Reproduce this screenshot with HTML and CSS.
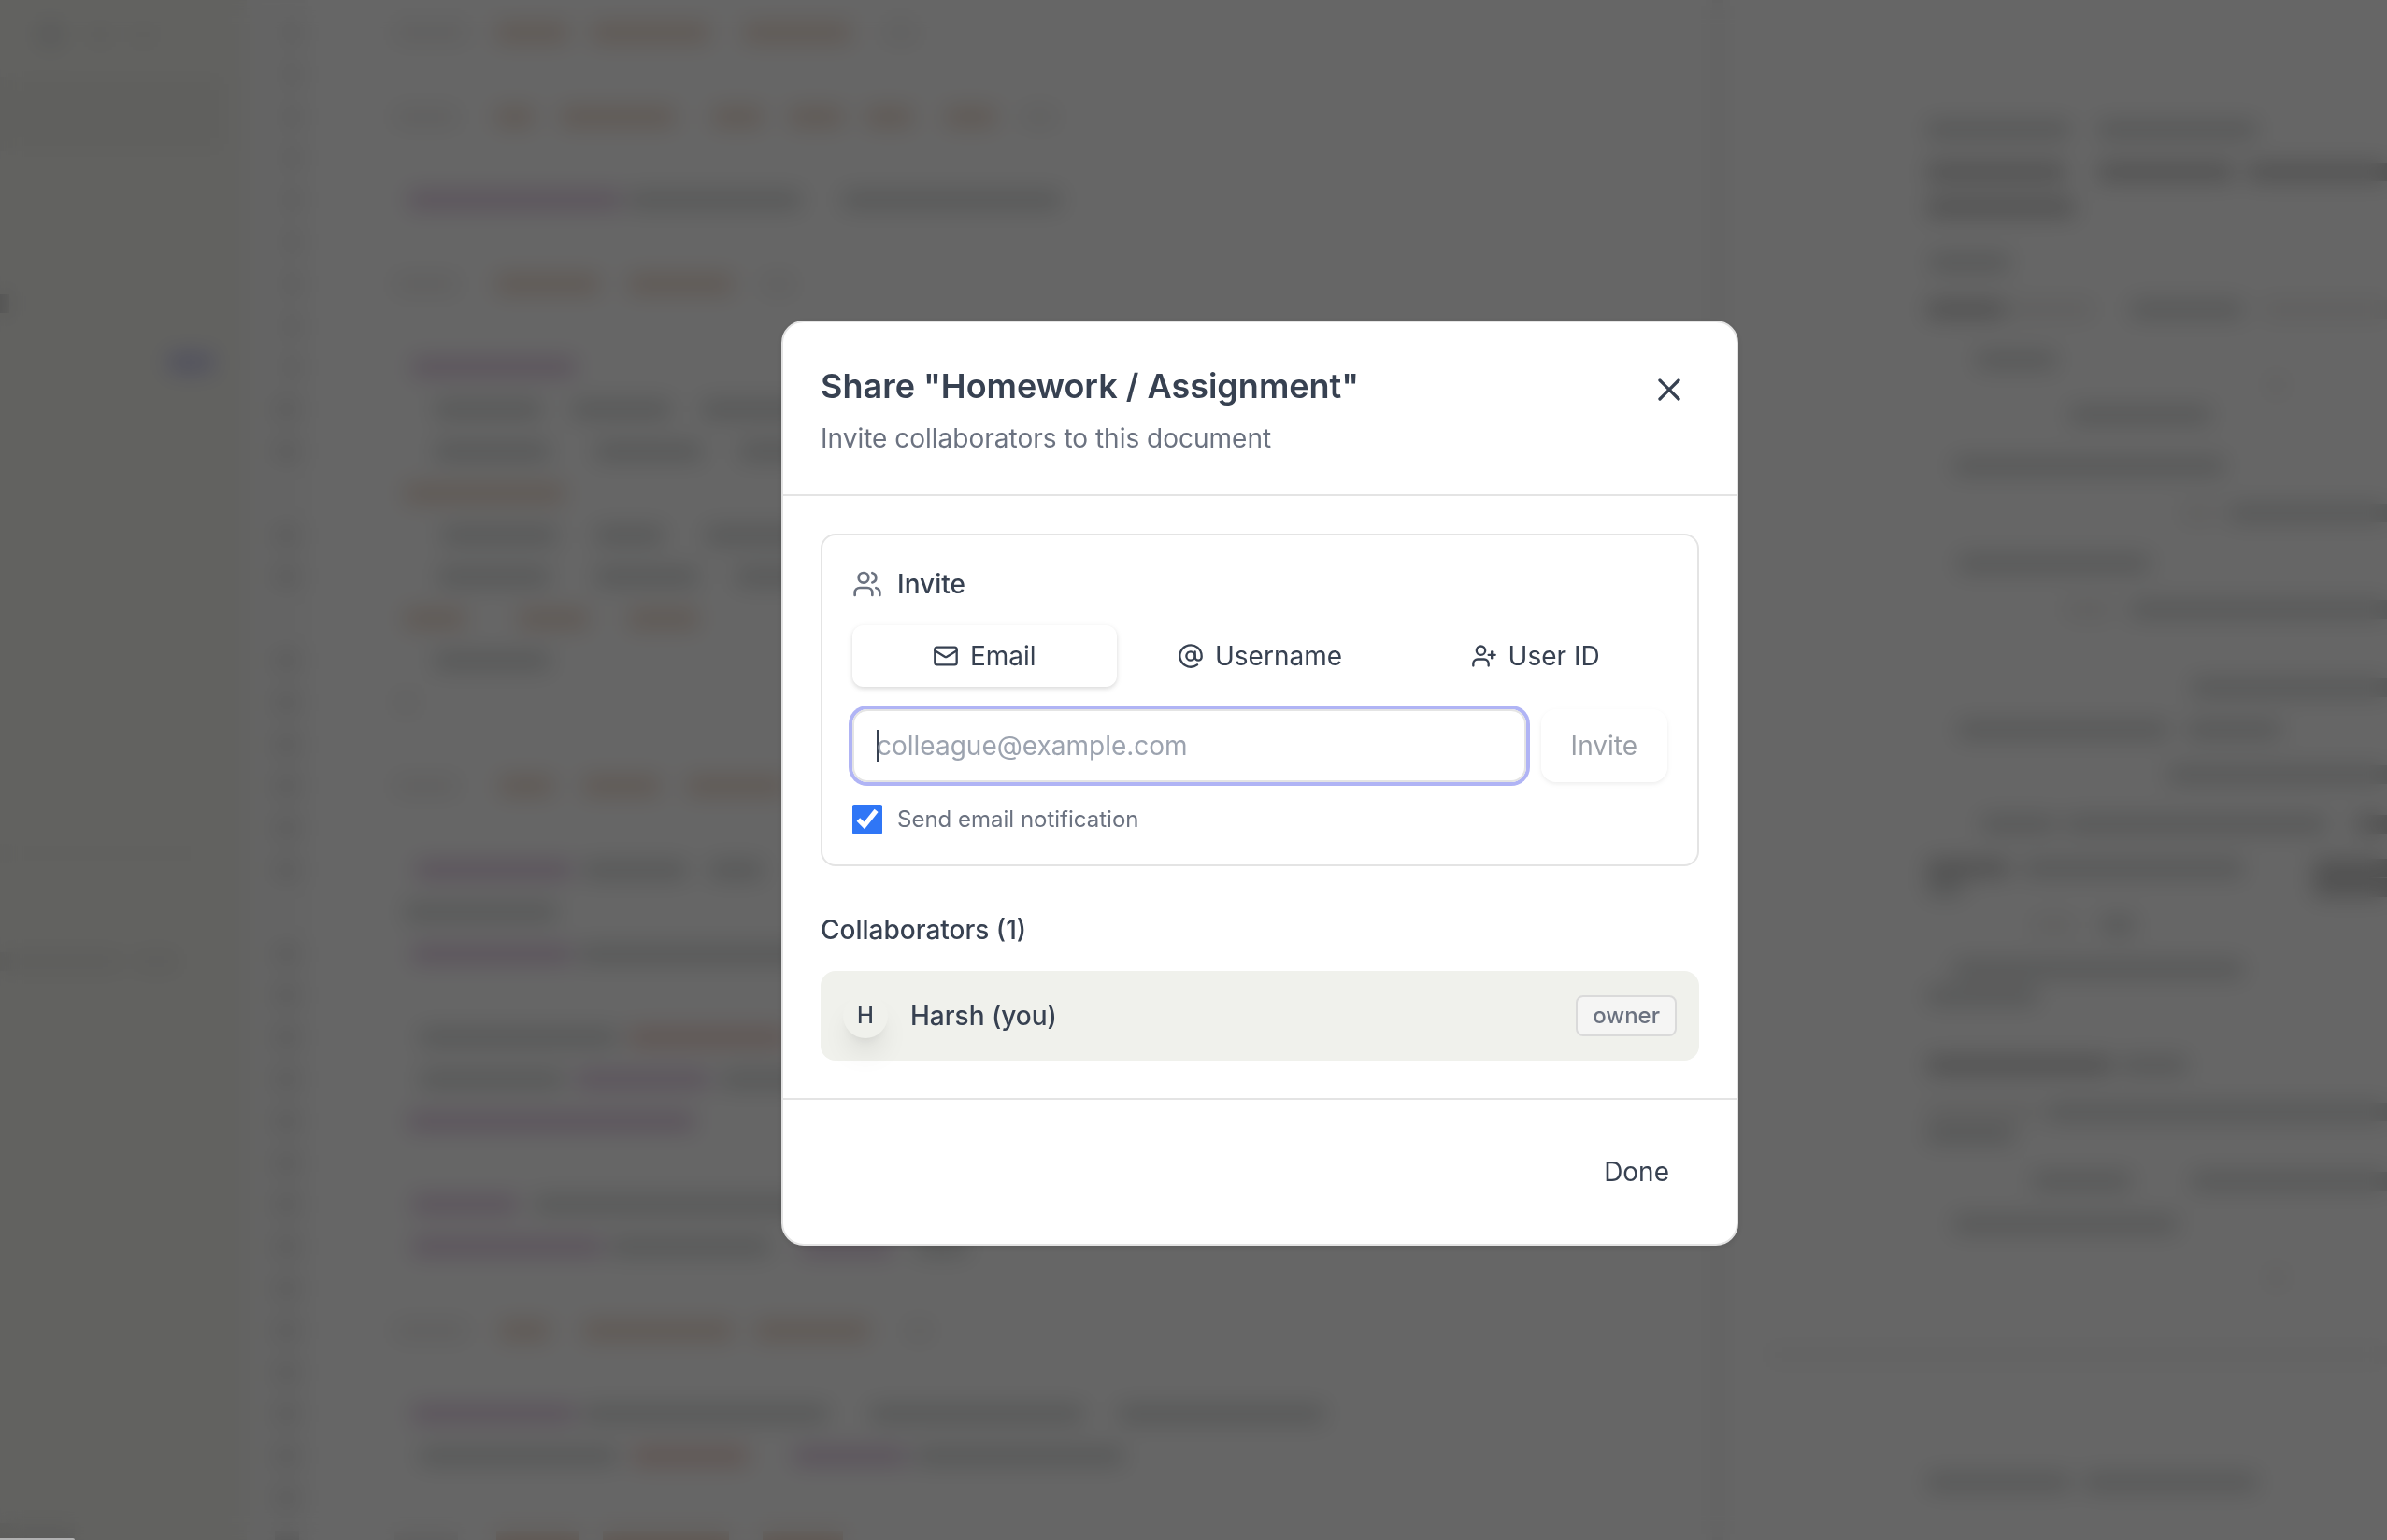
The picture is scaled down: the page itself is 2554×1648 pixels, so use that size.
FILE: index.html
```html
<!DOCTYPE html>
<html lang="en">

<head>
    <meta charset="UTF-8" />
    <meta name="viewport" content="width=device-width, initial-scale=1.0" />
    <title>Share document</title>

    <link rel="stylesheet" href="styles.css">
</head>

<body>
    <div class="workspace" aria-hidden="true">
        <div class="sidebar lines" data-lines="sidebar"></div>
        <div class="gutter lines" data-lines="gutter"></div>
        <div class="editor lines" data-lines="code"></div>
        <div class="preview lines" data-lines="page"></div>
    </div>

    <div class="overlay">
        <div class="modal" role="dialog" aria-modal="true" aria-labelledby="share-title">
            <header class="modal-header">
                <div>
                    <h2 class="modal-title" id="share-title">Share "Homework / Assignment"</h2>
                    <p class="modal-subtitle">Invite collaborators to this document</p>
                </div>
                <button type="button" class="close-button" aria-label="Close">
                    <svg class="icon icon-lg" viewBox="0 0 24 24">
                        <path d="M18 6 6 18" />
                        <path d="m6 6 12 12" />
                    </svg>
                </button>
            </header>

            <div class="modal-body">
                <form class="invite-box">
                    <h3 class="invite-heading">
                        <svg class="icon icon-md" viewBox="0 0 24 24">
                            <path d="M16 21v-2a4 4 0 0 0-4-4H6a4 4 0 0 0-4 4v2" />
                            <circle cx="9" cy="7" r="4" />
                            <path d="M22 21v-2a4 4 0 0 0-3-3.87" />
                            <path d="M16 3.13a4 4 0 0 1 0 7.75" />
                        </svg>
                        Invite
                    </h3>
                    <div class="tabs">
                        <button type="button" class="tab tab-active">
                            <svg class="icon icon-sm" viewBox="0 0 24 24">
                                <rect x="2" y="4" width="20" height="16" rx="2" />
                                <path d="m22 7-8.97 5.7a1.94 1.94 0 0 1-2.06 0L2 7" />
                            </svg>
                            Email
                        </button>
                        <button type="button" class="tab">
                            <svg class="icon icon-sm" viewBox="0 0 24 24">
                                <circle cx="12" cy="12" r="4" />
                                <path d="M16 8v5a3 3 0 0 0 6 0v-1a10 10 0 1 0-4 8" />
                            </svg>
                            Username
                        </button>
                        <button type="button" class="tab">
                            <svg class="icon icon-sm" viewBox="0 0 24 24">
                                <path d="M16 21v-2a4 4 0 0 0-4-4H6a4 4 0 0 0-4 4v2" />
                                <circle cx="9" cy="7" r="4" />
                                <path d="M19 8v6" />
                                <path d="M22 11h-6" />
                            </svg>
                            User ID
                        </button>
                    </div>
                    <div class="invite-row">
                        <input type="email" class="invite-input" placeholder="colleague@example.com" aria-label="Email address" />
                        <button type="submit" class="invite-button" disabled>Invite</button>
                    </div>
                    <div class="notify">
                        <input type="checkbox" class="notify-checkbox" id="notify" checked />
                        <label for="notify">Send email notification</label>
                    </div>
                </form>

                <section class="collaborators">
                    <h3 class="collaborators-title">Collaborators (1)</h3>
                    <div class="collaborator">
                        <span class="avatar">H</span>
                        <span class="collaborator-name">Harsh (you)</span>
                        <span class="role">owner</span>
                    </div>
                </section>
            </div>

            <footer class="modal-footer">
                <button type="button" class="done-button">Done</button>
            </footer>
        </div>
    </div>
    <div class="status-edge"></div>

    <script src="script.js"></script>
</body>

</html>
```

FILE: styles.css
```css
* {
    box-sizing: border-box;
    margin: 0;
    padding: 0;
}

body {
    background: #fff;
    color: #374151;
    font-family: Inter, "Liberation Sans", sans-serif;
    font-size: 28px;
    height: 100vh;
    line-height: 40px;
    overflow: hidden;
}

button,
input {
    background: none;
    border: none;
    color: inherit;
    font: inherit;
}

button {
    cursor: pointer;
}

/* document behind the dialog */
.workspace {
    display: grid;
    grid-template-columns: 264px 66px 1514px 1fr;
    height: 100vh;
    overflow: hidden;
}

.lines {
    overflow: hidden;
}

.sidebar {
    background: #f5f5f0;
}

.gutter {
    background: #fbfbfb;
}

.editor {
    border-right: 12px solid #f4f4f4;
}

.line {
    align-items: center;
    display: flex;
    height: 20px;
}

.run {
    flex: none;
    height: 20px;
}

.gray {
    background: #d9dbdb;
}

.faint {
    background: #f0efee;
}

.dark {
    background: #cbcbcb;
}

.orange {
    background: #efdccf;
}

.purple {
    background: #e3cee5;
}

.red {
    background: #efd3cc;
}

.blue {
    background: #c6c6ec;
}

.panel {
    background: #f0f0eb;
    height: 80px;
}

.rule {
    background: #f8f8f8;
}

.sidebar .rule {
    background: #f2f2ed;
}

.sidebar .faint {
    background: #e8e8e4;
}

.gutter .gray {
    background: #e2e2e2;
}

.overlay {
    align-items: center;
    backdrop-filter: blur(12px);
    background: rgba(0, 0, 0, 0.6);
    display: flex;
    inset: 0;
    justify-content: center;
    padding: 28px 0 0 142px;
    position: fixed;
}

.modal {
    background: #fff;
    border: 2px solid #e4e4e4;
    border-radius: 24px;
    box-shadow: 0 2px 8px rgba(0, 0, 0, 0.1);
    max-width: 1024px;
    width: 100%;
}

.icon {
    fill: none;
    flex: none;
    stroke: currentColor;
    stroke-linecap: round;
    stroke-linejoin: round;
    stroke-width: 2;
}

.icon-sm {
    height: 28px;
    width: 28px;
}

.icon-md {
    color: #6b7280;
    height: 32px;
    width: 32px;
}

.icon-lg {
    height: 40px;
    width: 40px;
}

.modal-header {
    align-items: flex-start;
    border-bottom: 2px solid #e4e4e4;
    display: flex;
    justify-content: space-between;
    padding: 40px;
}

.modal-title {
    font-size: 36px;
    font-weight: 600;
    line-height: 56px;
    margin-bottom: 8px;
}

.modal-subtitle {
    color: #6b7280;
}

.close-button {
    display: flex;
    padding: 12px;
}

.modal-body {
    display: flex;
    flex-direction: column;
    gap: 48px;
    padding: 40px;
}

.invite-box {
    border: 2px solid #e4e4e4;
    border-radius: 16px;
    display: flex;
    flex-direction: column;
    gap: 24px;
    padding: 32px;
}

.invite-heading {
    align-items: center;
    display: flex;
    font-size: 28px;
    font-weight: 500;
    gap: 16px;
}

.tabs {
    display: grid;
    gap: 12px;
    grid-template-columns: repeat(3, 1fr);
}

.tab {
    align-items: center;
    border-radius: 12px;
    display: flex;
    gap: 12px;
    height: 66px;
    justify-content: center;
}

.tab-active {
    box-shadow: 0 2px 6px rgba(0, 0, 0, 0.1), 0 2px 4px rgba(0, 0, 0, 0.06);
}

.invite-row {
    display: flex;
    gap: 16px;
}

/* the text cursor is painted so that it never blinks */
.invite-input {
    background: linear-gradient(#374151, #374151) 24px center / 2px 34px no-repeat;
    border: 2px solid #e4e4e4;
    border-radius: 16px;
    box-shadow: 0 0 0 4px #b0b4f5;
    caret-color: transparent;
    flex: 1;
    height: 78px;
    min-width: 0;
    outline: none;
    padding: 0 24px;
}

.invite-input::placeholder {
    color: #9ca3af;
}

.invite-button {
    border-radius: 16px;
    box-shadow: 0 2px 6px rgba(0, 0, 0, 0.1), 0 2px 4px rgba(0, 0, 0, 0.06);
    opacity: 0.5;
    padding: 0 32px;
}

.notify {
    align-items: center;
    color: #6b7280;
    display: flex;
    font-size: 24px;
    gap: 16px;
    line-height: 32px;
}

.notify-checkbox {
    accent-color: #2f76f6;
    height: 32px;
    width: 32px;
}

.collaborators-title {
    font-size: 28px;
    font-weight: 500;
    margin-bottom: 24px;
}

.collaborator {
    align-items: center;
    background: #f0f1ec;
    border-radius: 16px;
    display: flex;
    gap: 24px;
    height: 96px;
    padding: 0 24px;
}

.avatar {
    background: #f0f1ec;
    border-radius: 50%;
    box-shadow: 0 20px 30px -6px rgba(0, 0, 0, 0.1), 0 8px 12px -8px rgba(0, 0, 0, 0.1);
    font-size: 24px;
    font-weight: 500;
    height: 48px;
    line-height: 48px;
    text-align: center;
    width: 48px;
}

.collaborator-name {
    flex: 1;
    font-weight: 500;
}

.role {
    background: #f5f5f4;
    border: 2px solid #dadada;
    border-radius: 8px;
    color: #6b7280;
    font-size: 24px;
    font-weight: 500;
    height: 44px;
    padding: 0 16px;
}

.modal-footer {
    border-top: 2px solid #e4e4e4;
    display: flex;
    justify-content: flex-end;
    padding: 40px;
}

.done-button {
    height: 74px;
    padding: 0 32px;
}

/* top edge of the status bubble */
.status-edge {
    background: #b0b0b0;
    border-top-right-radius: 8px;
    bottom: 0;
    height: 2px;
    left: 0;
    position: fixed;
    width: 80px;
}
```

FILE: script.js
```js
// each line: [center y, [from x, to x, tone], ...], x counted from the column's left edge
const columns = {
    sidebar: [
        [37, [42, 66, "gray"], [98, 116, "faint"], [146, 162, "faint"]],
        [122, [0, 240, "panel"]],
        [325, [0, 10, "dark"]],
        [388, [180, 228, "blue"]],
        [913, [0, 215, "rule"]],
        [1029, [0, 130, "faint"], [145, 190, "faint"]],
        [1640, [0, 80, "faint"]]
    ],
    gutter: [],
    code: [],
    page: [
        [139, [218, 371, "gray"], [401, 571, "gray"]],
        [184, [218, 366, "dark"], [401, 546, "dark"], [561, 710, "dark"]],
        [222, [218, 376, "dark"]],
        [281, [221, 306, "gray"]],
        [331, [218, 301, "dark"], [306, 396, "faint"], [436, 556, "gray"], [576, 710, "faint"]],
        [385, [271, 356, "gray"]],
        [412, [584, 600, "faint"]],
        [444, [371, 521, "gray"]],
        [499, [246, 536, "gray"]],
        [549, [491, 526, "faint"], [541, 710, "gray"]],
        [603, [251, 456, "gray"]],
        [652, [366, 416, "faint"], [436, 710, "gray"]],
        [736, [501, 710, "gray"]],
        [781, [251, 476, "gray"], [496, 596, "gray"]],
        [829, [476, 710, "gray"]],
        [882, [276, 356, "gray"], [366, 646, "gray"], [676, 710, "dark"]],
        [929, [218, 306, "dark"], [321, 556, "gray"], [631, 710, "dark"]],
        [950, [218, 256, "gray"], [631, 710, "dark"]],
        [990, [331, 376, "faint"], [404, 440, "gray"]],
        [1037, [246, 556, "gray"]],
        [1066, [218, 336, "gray"]],
        [1140, [218, 416, "dark"], [426, 496, "gray"]],
        [1190, [218, 336, "faint"], [346, 710, "gray"]],
        [1214, [218, 311, "gray"]],
        [1264, [331, 436, "gray"], [501, 710, "gray"]],
        [1310, [246, 486, "gray"]],
        [1367, [584, 600, "faint"]],
        [1450, [46, 710, "rule"]],
        [1586, [218, 371, "gray"], [386, 571, "gray"]]
    ]
};

const code = {
    0: [[92, 170, "faint"], [201, 278, "orange"], [303, 429, "orange"], [466, 580, "orange"], [617, 650, "faint"]],
    2: [[92, 160, "faint"], [201, 241, "orange"], [270, 392, "orange"], [433, 486, "orange"], [515, 572, "orange"], [597, 646, "orange"], [682, 735, "orange"], [764, 800, "faint"]],
    4: [[107, 335, "purple"], [343, 527, "gray"], [572, 805, "gray"]],
    6: [[92, 160, "faint"], [201, 311, "orange"], [343, 454, "orange"], [486, 519, "faint"]],
    8: [[111, 286, "purple"]],
    9: [[135, 250, "gray"], [282, 388, "gray"], [421, 600, "gray"]],
    10: [[135, 258, "gray"], [307, 421, "gray"], [462, 600, "gray"]],
    11: [[103, 274, "orange"]],
    12: [[143, 266, "gray"], [307, 380, "gray"], [425, 600, "gray"]],
    13: [[139, 258, "gray"], [307, 417, "gray"], [458, 600, "gray"]],
    14: [[103, 168, "orange"], [225, 299, "orange"], [343, 417, "orange"]],
    15: [[135, 258, "gray"]],
    16: [[94, 115, "faint"]],
    18: [[92, 160, "faint"], [205, 262, "orange"], [294, 376, "orange"], [405, 510, "orange"]],
    20: [[115, 282, "purple"], [294, 405, "gray"], [429, 486, "gray"]],
    21: [[103, 266, "gray"]],
    22: [[111, 282, "purple"], [290, 600, "gray"]],
    24: [[119, 331, "gray"], [343, 511, "red"]],
    25: [[119, 274, "gray"], [286, 429, "purple"], [441, 560, "gray"]],
    26: [[107, 413, "purple"]],
    28: [[111, 225, "purple"], [241, 560, "gray"]],
    29: [[111, 315, "purple"], [323, 494, "gray"], [527, 625, "purple"], [650, 705, "gray"]],
    31: [[92, 170, "faint"], [205, 258, "orange"], [294, 454, "orange"], [478, 600, "orange"], [641, 666, "faint"]],
    33: [[111, 286, "purple"], [294, 556, "gray"], [601, 829, "gray"], [867, 1087, "gray"]],
    34: [[119, 331, "gray"], [347, 470, "red"], [519, 641, "purple"], [650, 872, "gray"]],
    36: [[92, 160, "faint"], [201, 290, "orange"], [315, 450, "orange"], [486, 572, "orange"]]
};

// wrapped lines carry no number
const wrapped = [11, 14, 21];

for (let i = 0; i < 37; i++) {
    const y = Math.round(35 + i * 44.8);
    if (code[i]) columns.code.push([y, ...code[i]]);
    if (!wrapped.includes(i)) columns.gutter.push([y, [i < 9 ? 42 : 30, 56, "gray"]]);
}

function drawColumn(el, lines) {
    let bottom = 0;
    lines.forEach(([y, ...runs]) => {
        const tall = runs[0][2] === "panel";
        const height = tall ? 80 : 20;
        const line = document.createElement("div");
        line.className = "line";
        line.style.height = `${height}px`;
        line.style.marginTop = `${y - height / 2 - bottom}px`;
        bottom = y + height / 2;
        let right = 0;
        runs.forEach(([from, to, tone]) => {
            const run = document.createElement("span");
            run.className = `run ${tone}`;
            run.style.marginLeft = `${from - right}px`;
            run.style.width = `${to - from}px`;
            right = to;
            line.appendChild(run);
        });
        el.appendChild(line);
    });
}

document.querySelectorAll(".lines").forEach(el => drawColumn(el, columns[el.dataset.lines]));
```
